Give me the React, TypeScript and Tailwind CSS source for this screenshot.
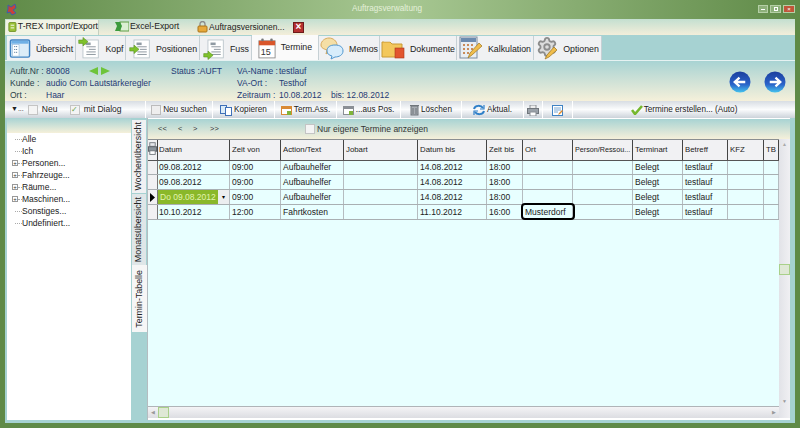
import React from 'react';
import {Settings} from 'lucide-react';

const FONT = "font-['Liberation_Sans',Arial,sans-serif]";
const GRID = "grid grid-cols-[10px_72px_51px_63px_74px_69px_36px_50px_60px_50px_45px_36px_15px]";

const DocIcon = ({arrow}: {arrow: "top" | "mid" | "bottom"}) => {
    const y = arrow === "top" ? 1 : arrow === "mid" ? 10 : 17;
    return (
        <svg width="23" height="23" viewBox="0 0 27 26">
            <rect x="7" y="3" width="18" height="21" fill="#fff" stroke="#b9c4c9"/>
            <rect x="10" y="6" width="6" height="3" fill="#8f9aa3"/>
            <path d="M11 11h11M14 14h8M11 17h11M11 20h11" stroke="#7d8790" strokeWidth="1"/>
            <path d={`M2 ${y + 2}h5v-3l6 5-6 5v-3H2z`} fill="#7fc12c" stroke="#4f8a16" strokeWidth=".6"/>
        </svg>
    );
};

const OverviewIcon = () => (
    <svg width="22" height="21" viewBox="0 0 22 22">
        <rect x="1" y="2" width="20" height="18" rx="1.5" fill="#dcecf8" stroke="#3f83c4" strokeWidth="1.5"/>
        <rect x="2" y="3" width="18" height="3" fill="#6fb0e6"/>
        <rect x="3" y="7" width="7" height="12" fill="#fff" stroke="#8fb6d8" strokeWidth=".6"/>
        <path d="M5 9h3M5 12h3M5 15h3" stroke="#35618a" strokeDasharray="1 1"/>
    </svg>
);

const CalendarIcon = () => (
    <svg width="18" height="22" viewBox="0 0 20 24">
        <rect x="1" y="4" width="18" height="19" fill="#fff" stroke="#8d8d8d"/>
        <rect x="1" y="4" width="18" height="5" fill="#d9562b"/>
        <circle cx="5" cy="3" r="1.5" fill="#777"/>
        <circle cx="15" cy="3" r="1.5" fill="#777"/>
        <text x="3" y="20" fontSize="10" fill="#333" fontFamily="Liberation Sans">15</text>
    </svg>
);

const MemoIcon = () => (
    <svg width="24" height="23" viewBox="0 0 24 23">
        <path d="M1 8c0-4 4-7 8-7s8 3 8 7-4 6-7 6l-4 3 1-4c-3-1-6-2-6-5z" fill="#f5dfa6" stroke="#d9a95a"/>
        <path d="M7 14c0-4 3-6 8-6s8 2 8 6-4 6-8 6l-4 2 1-3c-3-1-5-2-5-5z" fill="#d7ecfb" stroke="#4f96cf"/>
    </svg>
);

const FolderIcon = () => (
    <svg width="24" height="22" viewBox="0 0 24 22">
        <path d="M1 5h8l2 2h10v13H1z" fill="#f3c75c" stroke="#c99a34"/>
        <rect x="14" y="11" width="9" height="10" fill="#e2552f" stroke="#a9361a" strokeWidth=".6"/>
        <path d="M3 4h6" stroke="#eee"/>
    </svg>
);

const CalcIcon = () => (
    <svg width="24" height="24" viewBox="0 0 24 24">
        <rect x="1" y="1" width="17" height="21" fill="#e9edf2" stroke="#7b8ca0"/>
        <rect x="2" y="2" width="15" height="4" fill="#6c8bb0"/>
        <path d="M4 9h2M8 9h2M12 9h2M4 13h2M8 13h2M12 13h2M4 17h2M8 17h2" stroke="#c98b5a" strokeWidth="2"/>
        <path d="M9 22l2-5L20 7l3 3-10 9z" fill="#f0bd4c" stroke="#9c7420" strokeWidth=".7"/>
    </svg>
);

const OptionsIcon = () => (
    <div className="relative w-[22px] h-[24px]">
        <Settings size={22} strokeWidth={2} className="text-[#8c8c8c] fill-[#dcdcdc]"/>
        <svg width="14" height="14" viewBox="0 0 14 14" className="absolute left-[8px] top-[10px]">
            <path d="M1 13l2-4 7-8 3 3-8 7z" fill="#f0bd4c" stroke="#9c7420" strokeWidth=".7"/>
        </svg>
    </div>
);

const tabs: {label: string, w: string, icon: React.ReactNode, active?: boolean}[] = [
    {label: "Übersicht", w: "w-[69px]", icon: <OverviewIcon/>},
    {label: "Kopf", w: "w-[50px]", icon: <DocIcon arrow="top"/>},
    {label: "Positionen", w: "w-[74px]", icon: <DocIcon arrow="mid"/>},
    {label: "Fuss", w: "w-[52px]", icon: <DocIcon arrow="bottom"/>},
    {label: "Termine", w: "w-[67px]", icon: <CalendarIcon/>, active: true},
    {label: "Memos", w: "w-[61px]", icon: <MemoIcon/>},
    {label: "Dokumente", w: "w-[77px]", icon: <FolderIcon/>},
    {label: "Kalkulation", w: "w-[77px]", icon: <CalcIcon/>},
    {label: "Optionen", w: "w-[68px]", icon: <OptionsIcon/>},
];

const Check = ({checked}: {checked?: boolean}) => (
    <span className="w-[10px] h-[10px] bg-[#f4f4f4] border border-[#c4c4c4] flex items-center justify-center text-[8px] leading-none text-[#6aa84f]">
        {checked ? "✓" : ""}
    </span>
);

const ToolIcon = ({color}: {color: string}) => (
    <svg width="11" height="11" viewBox="0 0 11 11">
        <rect x=".5" y="1.5" width="10" height="8" fill="#fff" stroke={color}/>
        <rect x="1" y="2" width="9" height="2" fill={color}/>
        <rect x="6" y="6" width="4" height="4" fill="#7fb43a"/>
    </svg>
);

const tools: {w: string, label?: string, icon?: React.ReactNode}[] = [
    {w: "w-[67px]", label: "Neu suchen", icon: <span className="w-[10px] h-[10px] bg-[#eee] border border-[#bbb]"/>},
    {w: "w-[62px]", label: "Kopieren", icon: (
        <svg width="12" height="11" viewBox="0 0 12 11">
            <rect x=".5" y=".5" width="6" height="8" fill="#dcecf8" stroke="#3f70b8"/>
            <rect x="5.5" y="2.5" width="6" height="8" fill="#fff" stroke="#3f70b8"/>
        </svg>
    )},
    {w: "w-[62px]", label: "Term.Ass.", icon: <ToolIcon color="#d98a35"/>},
    {w: "w-[64px]", label: "...aus Pos.", icon: <ToolIcon color="#8a8f95"/>},
    {w: "w-[61px]", label: "Löschen", icon: (
        <svg width="9" height="12" viewBox="0 0 9 12">
            <rect x="1" y="2" width="7" height="9" fill="#a8adb3" stroke="#6f757b"/>
            <path d="M0 1.5h9M3 4v6M6 4v6" stroke="#6f757b"/>
        </svg>
    )},
    {w: "w-[62px]", label: "Aktual.", icon: (
        <svg width="12" height="12" viewBox="0 0 12 12" fill="none" stroke="#2f7fc8" strokeWidth="2">
            <path d="M1 5c1-4 7-4 9-1M11 7c-1 4-7 4-9 1"/>
            <path d="M11 1v4H7M1 11V7h4" strokeWidth="1.2"/>
        </svg>
    )},
    {w: "w-[19px]", icon: (
        <svg width="12" height="11" viewBox="0 0 12 11">
            <rect x="3" y="0" width="6" height="4" fill="#eee" stroke="#8a8f95"/>
            <rect x=".5" y="3.5" width="11" height="5" fill="#9aa1a8" stroke="#70767c"/>
            <rect x="3" y="7" width="6" height="4" fill="#fff" stroke="#8a8f95"/>
        </svg>
    )},
    {w: "w-[30px]", icon: (
        <svg width="12" height="11" viewBox="0 0 12 11">
            <rect x=".5" y=".5" width="10" height="10" fill="#fff" stroke="#3f83c4"/>
            <path d="M2 3h7M2 5h7M2 7h4" stroke="#7aa9d6"/>
            <path d="M6 10l1-2 3-3 1 1-3 3z" fill="#e08a2c"/>
        </svg>
    )},
];

const columns = ["Datum", "Zeit von", "Action/Text", "Jobart", "Datum bis", "Zeit bis", "Ort", "Person/Ressou...", "Terminart", "Betreff", "KFZ", "TB"];

const rows = [
    {h: "h-[14px]", cells: ["09.08.2012", "09:00", "Aufbauhelfer", "", "14.08.2012", "18:00", "", "", "Belegt", "testlauf", "", ""]},
    {h: "h-[15px]", cells: ["09.08.2012", "09:00", "Aufbauhelfer", "", "14.08.2012", "18:00", "", "", "Belegt", "testlauf", "", ""]},
    {h: "h-[15px]", active: true, cells: ["Do 09.08.2012", "09:00", "Aufbauhelfer", "", "14.08.2012", "18:00", "", "", "Belegt", "testlauf", "", ""]},
    {h: "h-[15px]", cells: ["10.10.2012", "12:00", "Fahrtkosten", "", "11.10.2012", "16:00", "Musterdorf", "", "Belegt", "testlauf", "", ""]},
];

const tree = [
    {t: "Alle"}, {t: "Ich"}, {t: "Personen...", plus: true}, {t: "Fahrzeuge...", plus: true},
    {t: "Räume...", plus: true}, {t: "Maschinen...", plus: true}, {t: "Sonstiges..."}, {t: "Undefiniert..."},
];

const Nav = ({dir}: {dir: "l" | "r"}) => (
    <svg width="22" height="22" viewBox="0 0 23 23">
        <defs>
            <linearGradient id={`nav${dir}`} x1="0" y1="0" x2="0" y2="1">
                <stop offset="0" stopColor="#1b3f9e"/>
                <stop offset=".6" stopColor="#2a62c8"/>
                <stop offset="1" stopColor="#45c3ee"/>
            </linearGradient>
        </defs>
        <circle cx="11.5" cy="11.5" r="11" fill={`url(#nav${dir})`}/>
        <path d={dir === "l" ? "M17 11.5H7M11 7l-5 4.5 5 4.5" : "M6 11.5h10M12 7l5 4.5-5 4.5"} stroke="#fff" strokeWidth="2.4" fill="none"/>
    </svg>
);

const App = () => {
    return (
        <div className={`${FONT} w-[800px] h-[428px] overflow-hidden flex flex-col bg-[#5f8a47] text-[#222] text-[8.5px]`}>
            {/* TITLE BAR */}
            <div className="h-[19px] shrink-0 relative flex items-center justify-center bg-gradient-to-r from-[#5f8a47] via-[#a8c893] to-[#5f8a47]">
                <svg width="12" height="13" viewBox="0 0 12 13" className="absolute left-[6px] top-[3px]">
                    <path d="M2 2l3 2 4-3 1 4-3 2 3 3-4 2-2-3-3 1 1-4z" fill="#c8413a" stroke="#3c5fa8"/>
                </svg>
                <span className="mr-[26px] text-[8.2px] text-[#e4f0da]">Auftragsverwaltung</span>
                <div className="absolute right-[5px] top-[5px] flex gap-[2px]">
                    <div className="w-[10px] h-[8px] bg-[#8db07a] border border-[#b5cfa6] flex items-center justify-center"><div className="w-[4px] h-px bg-white"/></div>
                    <div className="w-[11px] h-[8px] bg-[#8db07a] border border-[#b5cfa6] flex items-center justify-center"><div className="w-[4px] h-[4px] border border-white"/></div>
                    <div className="w-[12px] h-[8px] bg-[#c0563a] border border-[#b5cfa6] flex items-center justify-center text-[6px] leading-none text-white">×</div>
                </div>
            </div>
            {/* WINDOW BODY */}
            <div className="flex-1 min-h-0 mx-[5px] mb-[5px] flex flex-col bg-[#a6d2d2]">
                {/* QUICK BAR */}
                <div className="h-[16px] shrink-0 flex items-center pl-[1px] bg-gradient-to-b from-[#c3dfd0] to-[#f3eeda] text-[8.7px] whitespace-nowrap">
                    <div className="h-[15px] w-[93px] flex items-center gap-[1px] pl-[2px] bg-[#f0f3e4] border-r border-[#c5cfc0]">
                        <svg width="10" height="12" viewBox="0 0 10 12"><rect x="1" y="1" width="8" height="10" rx="1" fill="#9cc23a" stroke="#6a8f22"/><path d="M3 4h4M3 7h4" stroke="#fff"/></svg>
                        <span>T-REX Import/Export</span>
                    </div>
                    <div className="ml-[16px] flex items-center gap-[1px] w-[82px]">
                        <svg width="14" height="11" viewBox="0 0 14 11"><rect x="5" y="1" width="9" height="9" fill="#dcefd3" stroke="#5e9e45"/><path d="M0 1h5l2 4-2 5H0l2-5z" fill="#3c9a3c"/></svg>
                        <span>Excel-Export</span>
                    </div>
                    <div className="flex items-center gap-[1px] w-[91px]">
                        <svg width="11" height="12" viewBox="0 0 11 12"><path d="M3 5V3a2.5 2.5 0 015 0v2" fill="none" stroke="#8a8a8a" strokeWidth="1.3"/><rect x="1" y="5" width="9" height="6" rx="1" fill="#e7a93a" stroke="#a9741a"/></svg>
                        <span className="text-[8.5px]">Auftragsversionen...</span>
                    </div>
                    <div className="w-[11px] h-[11px] ml-[5px] bg-[#b53030] border border-[#6d1b1b] flex items-center justify-center text-white text-[10px] leading-none font-bold">×</div>
                </div>
                {/* TABS */}
                <div className="h-[25px] shrink-0 flex items-end pl-[2px]">
                    {tabs.map((tab) => (
                        <div key={tab.label} className={`${tab.w} flex items-center justify-center gap-[5px] border-r border-[#c6d0d4] text-[8.8px] ${tab.active ? "h-[25px] bg-[#fafafa]" : "h-[24px] bg-[#f0f1f3]"}`}>
                            {tab.icon}
                            <span className={tab.active ? "mt-[1px]" : "mt-[3px]"}>{tab.label}</span>
                        </div>
                    ))}
                </div>
                {/* ORDER INFO */}
                <div className="h-[41px] shrink-0 flex items-start pt-[4px] pl-[5px] pr-[5px] border-t border-[#e6f2f2] bg-gradient-to-b from-[#a8d3d3] to-[#f5f0da] text-[8.5px] leading-[12px] text-[#2a3f4a]">
                    <div className="w-[36px] flex flex-col">
                        <span>Auftr.Nr :</span>
                        <span>Kunde :</span>
                        <span>Ort :</span>
                    </div>
                    <div className="w-[125px] flex flex-col text-[#253a75]">
                        <div className="flex items-center gap-[19px]">
                            <span>80008</span>
                            <div className="flex gap-[3px]">
                                <svg width="9" height="8" viewBox="0 0 9 8"><path d="M0 4l9-4v8z" fill="#6ec43a"/></svg>
                                <svg width="9" height="8" viewBox="0 0 9 8"><path d="M9 4L0 0v8z" fill="#6ec43a"/></svg>
                            </div>
                        </div>
                        <span>audio Com Lautstärkeregler</span>
                        <span>Haar</span>
                    </div>
                    <span className="w-[66px] text-[#253a75]">Status :AUFT</span>
                    <div className="w-[42px] flex flex-col text-[#253a75]">
                        <span>VA-Name :</span>
                        <span>VA-Ort :</span>
                        <span>Zeitraum :</span>
                    </div>
                    <div className="flex flex-col text-[#253a75]">
                        <span>testlauf</span>
                        <span>Testhof</span>
                        <span>10.08.2012 &nbsp;&nbsp;&nbsp;bis: 12.08.2012</span>
                    </div>
                    <div className="ml-auto mt-[6px] flex gap-[13px] pr-[4px]">
                        <Nav dir="l"/>
                        <Nav dir="r"/>
                    </div>
                </div>
                {/* TOOLBAR */}
                <div className="h-[17px] shrink-0 flex bg-gradient-to-b from-[#d8dde3] via-[#fbfcfd] to-[#ccd3da] text-[8.2px]">
                    <div className="w-[141px] flex items-center gap-[4px] pl-[6px] border-r border-white text-[8.5px]">
                        <span className="text-[7px]">▼...</span>
                        <Check/>
                        <span className="w-[24px]">Neu</span>
                        <Check checked/>
                        <span>mit Dialog</span>
                    </div>
                    {tools.map((tool, i) => (
                        <div key={i} className={`${tool.w} flex items-center justify-center gap-[2px] pt-[1px] border-r border-white`}>
                            {tool.icon}
                            {tool.label && <span>{tool.label}</span>}
                        </div>
                    ))}
                    <div className="flex-1 flex items-center justify-center gap-[1px] pt-[1px]">
                        <svg width="12" height="10" viewBox="0 0 12 10"><path d="M1 5l3 4 7-8" fill="none" stroke="#76b82e" strokeWidth="2.6"/></svg>
                        <span>Termine erstellen... (Auto)</span>
                    </div>
                </div>
                {/* CONTENT */}
                <div className="flex-1 min-h-0 flex">
                    {/* TREE */}
                    <div className="w-[124px] ml-[2px] mb-[3px] shrink-0 flex flex-col bg-white">
                        <div className="h-[15px] bg-gradient-to-b from-[#a8d3d3] to-[#f5f0da]"/>
                        <div className="flex flex-col">
                            {tree.map((item) => (
                                <div key={item.t} className="h-[12px] flex items-center pl-[5px] text-[8.5px]">
                                    {item.plus ? (
                                        <>
                                            <span className="w-[6px] h-[6px] border border-[#999] flex items-center justify-center text-[6px] leading-none text-[#333]">+</span>
                                            <span className="w-[4px] border-t border-dotted border-[#aaa]"/>
                                        </>
                                    ) : (
                                        <span className="w-[10px] pl-[3px]"><span className="block border-t border-dotted border-[#aaa]"/></span>
                                    )}
                                    <span>{item.t}</span>
                                </div>
                            ))}
                        </div>
                    </div>
                    {/* SIDE TABS */}
                    <div className="w-[15px] ml-[1px] pt-[2px] shrink-0 flex flex-col text-[8.9px] items-start">
                        <div className="h-[73px] w-[14px] bg-[#f0f1f3] flex items-center justify-center">
                            <span className="[writing-mode:vertical-rl] rotate-180 whitespace-nowrap">Wochenübersicht</span>
                        </div>
                        <div className="h-[71px] w-[14px] mt-px bg-[#dfe6e8] flex items-center justify-center">
                            <span className="[writing-mode:vertical-rl] rotate-180 whitespace-nowrap">Monatsübersicht</span>
                        </div>
                        <div className="h-[67px] w-[15px] bg-[#f6f6f6] flex items-center justify-center">
                            <span className="[writing-mode:vertical-rl] rotate-180 whitespace-nowrap">Termin-Tabelle</span>
                        </div>
                    </div>
                    {/* TABLE PANEL */}
                    <div className="flex-1 min-w-0 mb-[3px] mr-[5px] flex flex-col border-l border-[#b5bcc0] bg-white">
                        <div className="h-[20px] shrink-0 mt-px flex items-center pl-[10px] bg-gradient-to-b from-[#a8d3d3] to-[#f5f0da] text-[7.5px] text-[#333]">
                            <span className="w-[20px]">&lt;&lt;</span>
                            <span className="w-[15px]">&lt;</span>
                            <span className="w-[17px]">&gt;</span>
                            <span className="w-[95px]">&gt;&gt;</span>
                            <Check/>
                            <span className="ml-[2px] text-[8.5px]">Nur eigene Termine anzeigen</span>
                        </div>
                        <div className="flex-1 min-h-0 flex pb-[2px]">
                            <div className="w-[631px] shrink-0 flex flex-col">
                                <div className="flex-1 min-h-0 bg-[#e8ffff] border-b border-[#b0b4b8] text-[7.8px]">
                                    {/* HEADER ROW */}
                                    <div className={`${GRID} h-[22px] bg-[#f1f1f3] border-t border-b border-t-[#8a8f92] border-b-[#555]`}>
                                        <div className="flex items-start justify-center pt-[2px] border-r border-[#444]">
                                            <svg width="10" height="14" viewBox="0 0 10 14">
                                                <rect x="2" y="0" width="6" height="4" fill="#e4e6ea" stroke="#70767c"/>
                                                <rect x=".5" y="4.5" width="9" height="5" fill="#8a939b" stroke="#5a6066"/>
                                                <rect x="2" y="9" width="6" height="4" fill="#fff" stroke="#70767c"/>
                                            </svg>
                                        </div>
                                        {columns.map((c, i) => (
                                            <div key={c} className={`flex items-center border-r border-[#444] overflow-hidden whitespace-nowrap ${i === 0 ? "pl-[1px]" : "pl-[2px]"} ${i === 7 ? "text-[7.2px]" : ""}`}>{c}</div>
                                        ))}
                                    </div>
                                    {/* DATA ROWS */}
                                    {rows.map((row, r) => (
                                        <div key={r} className={`${GRID} ${row.h} border-b border-[#a9afb2] text-[8.5px]`}>
                                            <div className="bg-[#f1f1f3] border-r border-[#777] flex items-center justify-center">
                                                {row.active && <svg width="5" height="9" viewBox="0 0 5 9"><path d="M0 0l5 4.5L0 9z" fill="#000"/></svg>}
                                            </div>
                                            {row.cells.map((cell, c) => {
                                                if (row.active && c === 0) {
                                                    return (
                                                        <div key={c} className="flex border-r border-[#b5bcc0]">
                                                            <div className="flex-1 flex items-center pl-[2px] bg-[#8ab82a] text-[#e2f4b0] whitespace-nowrap">{cell}</div>
                                                            <div className="w-[11px] bg-[#eceef0] flex items-center justify-center text-[6px] text-black">▾</div>
                                                        </div>
                                                    );
                                                }
                                                return (
                                                    <div key={c} className={`relative flex items-center border-r border-[#b5bcc0] whitespace-nowrap ${c === 0 ? "pl-[1px]" : "pl-[2px]"}`}>
                                                        {cell}
                                                        {cell === "Musterdorf" && <div className="absolute left-[-2px] right-[-3px] top-[-2px] bottom-[-1px] border-[2px] border-black rounded-[4px]"/>}
                                                    </div>
                                                );
                                            })}
                                        </div>
                                    ))}
                                </div>
                                {/* HORIZONTAL SCROLLBAR */}
                                <div className="h-[11px] shrink-0 flex items-center bg-gradient-to-b from-[#f4f4f6] to-[#dcdde2]">
                                    <span className="w-[9px] pl-[3px] text-[5px] text-[#999]">◀</span>
                                    <div className="w-[11px] h-[11px] ml-[1px] bg-[#dfe8d6] border border-[#a9d08a]"/>
                                    <span className="ml-auto pr-[3px] text-[5px] text-[#999]">▶</span>
                                </div>
                            </div>
                            {/* VERTICAL SCROLLBAR */}
                            <div className="flex-1 flex flex-col items-center bg-gradient-to-r from-[#e2e3e8] to-[#f0f0f3]">
                                <span className="text-[5px] mt-[2px] text-[#aaa]">▲</span>
                                <div className="mt-[115px] w-[11px] h-[11px] bg-[#dfe8d6] border border-[#a9d08a]"/>
                                <span className="mt-auto mb-[13px] text-[5px] text-[#999]">▼</span>
                            </div>
                        </div>
                    </div>
                </div>
            </div>
        </div>
    );
};

export default App;
